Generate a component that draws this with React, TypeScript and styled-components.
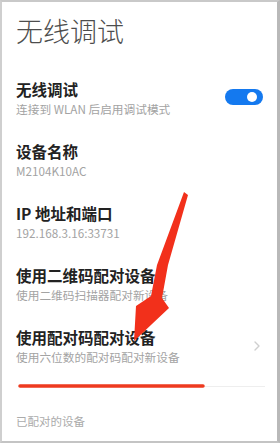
import React from 'react';
import styled, { createGlobalStyle } from 'styled-components';

const GlobalStyle = createGlobalStyle`
  html, body {
    margin: 0;
    padding: 0;
    background: #ffffff;
  }
  * {
    box-sizing: border-box;
  }
`;

interface SettingItem {
  key: string;
  title: string;
  subtitle: string;
  accessory?: 'switch' | 'chevron';
}

const items: SettingItem[] = [
  { key: 'wireless', title: '无线调试', subtitle: '连接到 WLAN 后启用调试模式', accessory: 'switch' },
  { key: 'name', title: '设备名称', subtitle: 'M2104K10AC' },
  { key: 'ip', title: 'IP 地址和端口', subtitle: '192.168.3.16:33731' },
  { key: 'qr', title: '使用二维码配对设备', subtitle: '使用二维码扫描器配对新设备' },
  { key: 'code', title: '使用配对码配对设备', subtitle: '使用六位数的配对码配对新设备', accessory: 'chevron' },
];

const Frame = styled.div`
  position: relative;
  width: 280px;
  height: 443px;
  overflow: hidden;
  background: #ffffff;
  border-style: solid;
  border-color: #c9c9c9 #b9b9b9 #c4c4c4 #cfcfcf;
  border-width: 2px 3px 2px 2px;
  font-family: 'Noto Sans CJK SC', 'Noto Sans', sans-serif;
`;

const PageTitle = styled.h1`
  margin: 11px 0 0 0;
  padding-left: 14px;
  height: 36px;
  line-height: 36px;
  font-size: 27px;
  font-weight: 300;
  color: #4d4d4d;
  letter-spacing: 0;
`;

const List = styled.div`
  display: flex;
  flex-direction: column;
  margin-top: 17.5px;
`;

const Row = styled.div`
  display: flex;
  align-items: center;
  padding: 12px 14px 11px 14px;
  height: 62px;
`;

const RowText = styled.div`
  flex: 1;
  min-width: 0;
  display: flex;
  flex-direction: column;
`;

const RowTitle = styled.div`
  height: 20px;
  line-height: 20px;
  font-size: 15.5px;
  font-weight: 700;
  color: #222222;
  white-space: nowrap;
`;

const RowSubtitle = styled.div`
  margin-top: 1px;
  height: 18px;
  line-height: 18px;
  font-size: 11.7px;
  color: #a3a3a3;
  white-space: nowrap;
`;

const Switch = styled.div<{ $on: boolean }>`
  position: relative;
  flex-shrink: 0;
  width: 38px;
  height: 16px;
  margin-bottom: 3px;
  border-radius: 8px;
  background: ${(p) => (p.$on ? '#1479ef' : '#d9d9d9')};

  &::after {
    content: '';
    position: absolute;
    top: 3px;
    left: ${(p) => (p.$on ? '22px' : '3px')};
    width: 10px;
    height: 10px;
    border-radius: 50%;
    background: #ffffff;
  }
`;

const Chevron = styled.svg`
  flex-shrink: 0;
  margin-right: 3px;
`;

const Divider = styled.div`
  margin: 9.5px 12px 0 16px;
  height: 1px;
  background: #eeeeee;
`;

const Footer = styled.div`
  margin-top: 25px;
  padding-left: 14px;
  height: 18px;
  line-height: 18px;
  font-size: 11.5px;
  color: #ababab;
`;

const Annotation = styled.svg`
  position: absolute;
  top: -2px;
  left: -2px;
  pointer-events: none;
`;

export default function App() {
  return (
    <>
      <GlobalStyle />
      <Frame>
        <PageTitle>无线调试</PageTitle>
        <List>
          {items.map((item) => (
            <Row key={item.key}>
              <RowText>
                <RowTitle>{item.title}</RowTitle>
                <RowSubtitle>{item.subtitle}</RowSubtitle>
              </RowText>
              {item.accessory === 'switch' && <Switch $on />}
              {item.accessory === 'chevron' && (
                <Chevron width="6" height="10" viewBox="0 0 6 10">
                  <path d="M1 1 L5 5 L1 9" fill="none" stroke="#cfcfcf" strokeWidth="1.4" strokeLinecap="round" strokeLinejoin="round" />
                </Chevron>
              )}
            </Row>
          ))}
        </List>
        <Divider />
        <Footer>已配对的设备</Footer>

        {/* hand-drawn red markup over the screenshot */}
        <Annotation width="280" height="443" viewBox="0 0 280 443">
          <path
            d="M184 192 L188 195 L168 265 L162 298 L169 308 L134 341 L136 306 L151 296 L157 265 Z"
            fill="#f2301b"
          />
          <line x1="20" y1="386" x2="203" y2="386" stroke="#ee3a1f" strokeWidth="3.5" strokeLinecap="round" />
        </Annotation>
      </Frame>
    </>
  );
}
